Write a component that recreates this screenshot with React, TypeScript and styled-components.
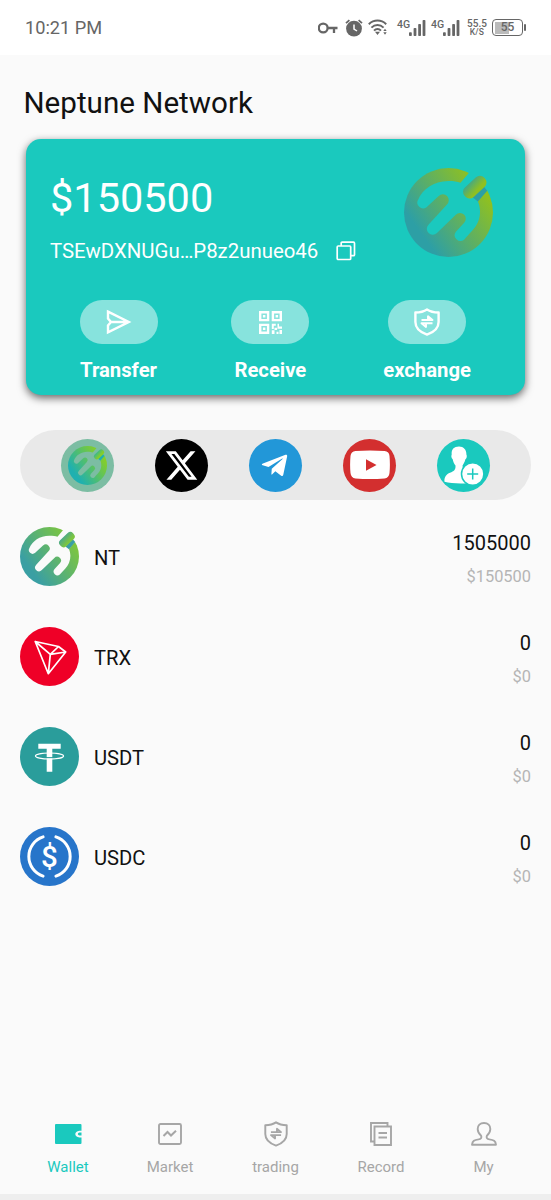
import React from "react";
import styled, { createGlobalStyle } from "styled-components";
import { FaTelegramPlane } from "react-icons/fa";
import { FaXTwitter } from "react-icons/fa6";

const TEAL = "#1ac9be";

const GlobalStyle = createGlobalStyle`
  *, *::before, *::after { box-sizing: border-box; }
  body { margin: 0; background: #fafafa; font-family: Roboto, "Liberation Sans", sans-serif; }
  svg { display: block; flex: none; }
`;

const Screen = styled.div`
  display: flex;
  flex-direction: column;
  width: 551px;
  height: 1200px;
  background: #fafafa;
  color: #111;
  overflow: hidden;
`;

const StatusBar = styled.header`
  display: flex;
  align-items: center;
  justify-content: space-between;
  height: 55px;
  padding: 0 25px 0 25px;
  background: #fff;
  color: #666;
`;

const Clock = styled.span`
  font-size: 18.2px;
  line-height: 22px;
  padding-top: 1px;
`;

const StatusIcons = styled.div`
  display: flex;
  align-items: center;
`;

const Speed = styled.div`
  display: flex;
  flex-direction: column;
  align-items: center;
  width: 20px;
  margin: 0 5px 0 8px;
  font-weight: 500;
  font-size: 10px;
  line-height: 9px;
`;

const SpeedUnit = styled.span`
  font-size: 8.5px;
  letter-spacing: 0.2px;
`;

const Title = styled.h1`
  margin: 30px 0 0 23.5px;
  font-size: 29.6px;
  font-weight: 400;
  line-height: 36px;
`;

const Card = styled.section`
  width: 499px;
  height: 256px;
  margin: 18px 0 0 26px;
  padding-top: 29px;
  border-radius: 15px;
  background: ${TEAL};
  color: #fff;
  box-shadow: 0 3px 9px rgba(0, 0, 0, 0.6);
`;

const CardHead = styled.div`
  display: flex;
  justify-content: space-between;
  height: 95px;
  padding: 0 32.5px 0 24px;
`;

const Account = styled.div`
  display: flex;
  flex-direction: column;
  gap: 16px;
  padding-top: 5px;
`;

const Balance = styled.div`
  font-size: 41.5px;
  line-height: 50px;
`;

const Address = styled.div`
  display: flex;
  align-items: center;
  gap: 18px;
  font-size: 20.4px;
  line-height: 24px;
`;

const Actions = styled.div`
  display: flex;
  justify-content: space-between;
  margin-top: 37px;
  padding: 0 54px 0 53.5px;
`;

const Action = styled.div`
  display: flex;
  flex-direction: column;
  align-items: center;
  gap: 14px;
  font-size: 20.3px;
  font-weight: 700;
  line-height: 24px;
`;

const Pill = styled.div`
  display: flex;
  align-items: center;
  justify-content: center;
  width: 78px;
  height: 44px;
  border-radius: 22px;
  background: rgba(255, 255, 255, 0.48);
`;

const Socials = styled.nav`
  display: flex;
  align-items: center;
  justify-content: space-between;
  height: 70px;
  margin: 35px 20px 0;
  padding: 0 41px;
  border-radius: 35px;
  background: #e9e9e9;
`;

const SocialButton = styled.div<{ $bg: string }>`
  display: flex;
  align-items: center;
  justify-content: center;
  width: 53px;
  height: 53px;
  border-radius: 50%;
  background: ${(p) => p.$bg};
  color: #fff;
`;

const Assets = styled.main`
  display: flex;
  flex-direction: column;
  flex: 1;
  gap: 41px;
  padding: 27px 20px 0;
`;

const AssetRow = styled.div`
  display: flex;
  align-items: center;
  height: 59px;
`;

const Symbol = styled.span`
  flex: 1;
  padding: 3px 0 0 15px;
  font-size: 20.2px;
  line-height: 24px;
`;

const Amounts = styled.div`
  display: flex;
  flex-direction: column;
  align-items: flex-end;
  gap: 12px;
  padding-top: 5px;
`;

const Quantity = styled.span`
  font-size: 20px;
  line-height: 24px;
`;

const Fiat = styled.span`
  font-size: 16.4px;
  line-height: 20px;
  color: #b5b5b5;
`;

const TabBar = styled.nav`
  display: grid;
  grid-template-columns: 102px 102px 109px 102px 103px;
  height: 74px;
  padding-left: 17px;
`;

const Tab = styled.div<{ $active?: boolean }>`
  display: flex;
  flex-direction: column;
  align-items: center;
  gap: 9px;
  font-size: 15px;
  line-height: 20px;
  color: ${(p) => (p.$active ? TEAL : "#a6a6a6")};
`;

const IconSlot = styled.div`
  display: flex;
  align-items: center;
  height: 28px;
`;

const BottomEdge = styled.div`
  height: 6px;
  background: #eee;
`;

type LogoProps = { size: number; id: string; from: string; to: string };

function NeptuneLogo({ size, id, from, to }: LogoProps) {
  return (
    <svg width={size} height={size} viewBox="0 0 100 100">
      <defs>
        <linearGradient id={id + "g"} x1="0.12" y1="0.8" x2="0.88" y2="0.25">
          <stop offset="0.1" stopColor={from} />
          <stop offset="1" stopColor={to} />
        </linearGradient>
        <linearGradient id={id + "h"} x1="0.3" y1="-0.3" x2="0.55" y2="0.8">
          <stop offset="0" stopColor={from} />
          <stop offset="1" stopColor={to} />
        </linearGradient>
        <mask id={id + "m"}>
          <rect width="100" height="100" fill="#fff" />
          <path
            fill="#000"
            d="M16 35.5C21 24 33 14.7 50 14.7C56 14.7 60 15.4 63.5 16.5L75 3L90 3L94 24L83 37C86 45 86.5 53 83 61C80 68 74 73 67.5 80.5A6.5 6.5 0 0 1 58.3 71.5L67.6 61.5A6.5 6.5 0 0 0 58.2 52.5L37 73A6.5 6.5 0 0 1 27.5 63.8L48.3 41A6.5 6.5 0 0 0 39 31.5L25.3 44.2A6.5 6.5 0 0 1 16 35.5Z"
          />
        </mask>
      </defs>
      <circle cx="50" cy="50" r="50" fill={`url(#${id}g)`} mask={`url(#${id}m)`} />
      <path d="M77 33L89 20L93.5 25.500L83 37.500Z" fill={from} />
      <rect x="64.500" y="14.200" width="30" height="14.500" rx="6.500" transform="rotate(-43 79.5 21.4)" fill={`url(#${id}h)`} />
    </svg>
  );
}

function KeyIcon() {
  return (
    <svg width="20" height="14" viewBox="0 0 20 14" fill="none" stroke="currentColor" strokeWidth="2.3">
      <circle cx="5.2" cy="7" r="4.4" />
      <path d="M9 7H19.5M16 7v5" />
    </svg>
  );
}

function AlarmIcon() {
  return (
    <svg width="18" height="18" viewBox="0 0 18 18" style={{ marginLeft: 7 }}>
      <circle cx="9" cy="9.6" r="7.9" fill="currentColor" />
      <path d="M1 4.2L4.4 1.2M17 4.2L13.6 1.2" stroke="currentColor" strokeWidth="1.8" fill="none" />
      <path d="M9 5.5V10l3 2" stroke="#fff" strokeWidth="1.5" fill="none" />
    </svg>
  );
}

function WifiIcon() {
  return (
    <svg width="20" height="17" viewBox="0 0 20 17" fill="none" stroke="currentColor" strokeWidth="2" style={{ marginLeft: 5, marginRight: 3 }}>
      <path d="M.8 5.2C5.8.4 13.2.4 18.2 5.2M3.4 8.6C7 5 12 5 15.6 8.600M6 11.600c2-2 5-2 7 0" />
      <path d="M7 12.700h5L9.500 15.900z" fill="currentColor" stroke="none" />
      <path d="M15.300 12L17 9.800 18.700 12zM15.300 13.300h3.400L17 15.700z" fill="currentColor" stroke="none" />
    </svg>
  );
}

const Signal = styled.div`
  display: flex;
  align-items: flex-start;
  width: 28px;
  height: 18px;
  margin-left: 6px;
  font-size: 10.5px;
  font-weight: 500;
  line-height: 11px;
`;

function SignalIcon() {
  return (
    <Signal>
      4G
      <svg width="17" height="18" viewBox="0 0 17 18" fill="currentColor" style={{ marginLeft: -1 }}>
        <rect x="0" y="13.2" width="2.8" height="3.8" rx="0.8" />
        <rect x="4.6" y="9" width="2.8" height="8" rx="0.8" />
        <rect x="9.2" y="5" width="2.8" height="12" rx="0.8" />
        <rect x="13.6" y="1" width="2.8" height="16" rx="0.8" />
      </svg>
    </Signal>
  );
}

const Battery = styled.div`
  display: flex;
  align-items: center;
`;

const BatteryBody = styled.div`
  width: 31px;
  height: 17px;
  border: 1.5px solid #666;
  border-radius: 4px;
  background: linear-gradient(#bbb, #bbb) 1.5px 1.5px / 14px 12px no-repeat;
  font-size: 12px;
  font-weight: 500;
  line-height: 15px;
  text-align: center;
`;

const BatteryCap = styled.div`
  width: 2px;
  height: 7px;
  margin-left: 1px;
  border-radius: 1px;
  background: #666;
`;

function CopyIcon() {
  return (
    <svg width="20" height="20" viewBox="0 0 20 20" fill="none" stroke="#fff" strokeWidth="1.7" strokeLinejoin="round">
      <rect x="1.2" y="5" width="13.5" height="13.5" rx="1" />
      <path d="M5.200 5V2.200Q5.200 1.200 6.200 1.200H17.500Q18.500 1.200 18.500 2.200V13.700Q18.500 14.700 17.500 14.700H14.700" />
    </svg>
  );
}

function SendIcon() {
  return (
    <svg width="26" height="26" viewBox="0 0 26 26" fill="none" stroke="#fff" strokeWidth="2.4" strokeLinejoin="miter">
      <path d="M2 2.600L22.800 13 2 23.400V16.500L5 13 2 9.500zM5 13H22" />
    </svg>
  );
}

function QrIcon() {
  return (
    <svg width="23" height="23" viewBox="0 0 23 23" fill="none" stroke="#fff" strokeWidth="2.4">
      <path d="M1.200 1.200h7.900v7.900H1.200zM13.900 1.200h7.900v7.900h-7.900zM1.200 13.900h7.900v7.900H1.200z" />
      <path fill="#fff" stroke="none" d="M3.900 3.900h2.500v2.500H3.900zM16.600 3.900h2.500v2.500h-2.500zM3.900 16.600h2.500v2.500H3.900zM12.800 12.800h4v2h-2v3.200h-2zM18.500 12.800H20v2.600h3v2.300h-4.500zM15.500 16.800h2.600v2.300h-2.600zM12.800 19.300h2.700V23h-2.700zM17.500 20.800h2V23h-2zM20.500 19H23v4h-2.500z" />
    </svg>
  );
}

function ShieldIcon({ width = 26, stroke = 2.4 }: { width?: number; stroke?: number }) {
  return (
    <svg width={width} height={width * 1.08} viewBox="0 0 26 28" fill="none" stroke="currentColor" strokeWidth={stroke} strokeLinejoin="round">
      <path d="M13 1.400C10 3.400 5.500 4.400 1.400 4.500V14c0 6.400 5 10.300 11.600 12.600C19.600 24.300 24.600 20.400 24.600 14V4.500C20.500 4.400 16 3.400 13 1.400z" />
      <path d="M7.500 12H18.500L14 8.300V12M18.500 15.200H7.500L12 18.900V15.200" strokeWidth="1.900" />
    </svg>
  );
}

function YoutubeIcon() {
  return (
    <svg width="40" height="30" viewBox="0 0 40 30">
      <path d="M5.500 1Q20 0 34.500 1Q39.200 1.500 39.500 6Q40.300 15 39.500 23Q39 28 34.500 28.400Q20 29.500 5.500 28.400Q1 28 .5 23Q-.3 15 .5 6Q1 1.500 5.500 1z" fill="#fff" />
      <path d="M16 9.300L26.500 14.900 16 20.700z" fill="#d32f2f" />
    </svg>
  );
}

function InviteIcon() {
  return (
    <svg width="53" height="53" viewBox="0 0 53 53">
      <path d="M22 7.500C26.500 7.500 29.500 10.500 29.400 15.500C30.300 17 29.600 19.500 28.400 20.200C27.800 23 26.500 25 25.600 26.200C25.500 30.500 27 31 32 33.500L30 44.200C22 44.800 13 44.200 7.500 42.800C7 38 9.500 35.300 13 33.800C17 32 18.800 31 18.500 26.500C17.200 25 16.100 22.800 15.700 20.200C14.300 19 14 16.800 14.700 15.400C14.200 10.500 17 7.500 22 7.500z" fill="#fff" />
      <circle cx="35.700" cy="35" r="11.200" fill="#fff" stroke={TEAL} strokeWidth="1.500" />
      <path d="M35.700 29.500v11M30.200 35h11" stroke={TEAL} strokeWidth="1.500" />
    </svg>
  );
}

function TronCoin() {
  return (
    <svg width="59" height="59" viewBox="0 0 59 59">
      <circle cx="29.500" cy="29.500" r="29.500" fill="#ef0027" />
      <path d="M15.200 14.500L38.500 19.500 45.700 25 28.300 46.700zM15.200 14.500L30.300 27.300 28.300 46.700M38.500 19.500L30.300 27.300 45.700 25" fill="none" stroke="#fff" strokeWidth="1.700" strokeLinejoin="round" />
    </svg>
  );
}

function TetherCoin() {
  return (
    <svg width="59" height="59" viewBox="0 0 59 59">
      <circle cx="29.500" cy="29.500" r="29.500" fill="#2a9d9b" />
      <path d="M18.300 16.700h22.400v5h-8.400v23h-5.600v-23h-8.400z" fill="#fff" />
      <path d="M26 30.700h7" stroke="#2a9d9b" strokeWidth="1.200" />
      <ellipse cx="29.500" cy="29" rx="14.100" ry="3" fill="none" stroke="#fff" strokeWidth="1.100" />
    </svg>
  );
}

function UsdcCoin() {
  return (
    <svg width="59" height="59" viewBox="0 0 59 59">
      <circle cx="29.500" cy="29.500" r="29.500" fill="#2775ca" />
      <path d="M23.100 9.900A20.600 20.600 0 0 0 23.100 49.100M35.900 9.900A20.600 20.600 0 0 1 35.900 49.100" fill="none" stroke="#fff" strokeWidth="3" strokeLinecap="round" />
      <text x="29.500" y="40" textAnchor="middle" fill="#fff" fontFamily="Roboto" fontSize="29.500" fontWeight="500">$</text>
    </svg>
  );
}

function WalletIcon() {
  return (
    <svg width="27" height="20" viewBox="0 0 27 20">
      <path d="M1 0H25.500Q26.500 0 26.500 1V6.700H24.500Q20.300 7.500 20.300 10Q20.300 12.800 24.500 13.500H26.500V19Q26.500 20 25.500 20H1Q0 20 0 19V1Q0 0 1 0z" fill="currentColor" />
      <path d="M26.500 8.600H24.500Q22.800 9 22.800 10.100Q22.800 11.300 24.500 11.600H26.500z" fill="currentColor" />
    </svg>
  );
}

function MarketIcon() {
  return (
    <svg width="24" height="22" viewBox="0 0 24 22" fill="none" stroke="currentColor" strokeWidth="1.900">
      <rect x="1" y="0.950" width="22" height="20.100" rx="1.500" />
      <path d="M5.500 13L9.500 9 13 12.500 18 7.800" strokeWidth="2" />
    </svg>
  );
}

function RecordIcon() {
  return (
    <svg width="22" height="24" viewBox="0 0 22 24" fill="none" stroke="currentColor" strokeWidth="1.900">
      <path d="M4.500 19.500H1V1H17.500V4" />
      <path d="M4.500 4.500H21V23H4.500zM8.500 11h8.500M8.500 15.500h8.500" />
    </svg>
  );
}

function PersonIcon() {
  return (
    <svg width="26" height="24" viewBox="0 0 26 24" fill="none" stroke="currentColor" strokeWidth="1.900" strokeLinejoin="round">
      <path d="M13 1C16.900 1 19.400 3.300 19.300 7.200C19.200 10 17.800 12 15.900 13.700C15.200 16 16 16.900 18.500 17.400C22.500 18 24.600 18.800 25 22.800H1C1.400 18.800 3.500 18 7.500 17.400C10 16.900 10.800 16 10.100 13.700C8.200 12 6.800 10 6.700 7.200C6.600 3.300 9.100 1 13 1z" />
    </svg>
  );
}

const assets = [
  { symbol: "NT", quantity: "1505000", fiat: "$150500", icon: <NeptuneLogo size={59} id="nt" from="#3a9fa3" to="#7cc540" /> },
  { symbol: "TRX", quantity: "0", fiat: "$0", icon: <TronCoin /> },
  { symbol: "USDT", quantity: "0", fiat: "$0", icon: <TetherCoin /> },
  { symbol: "USDC", quantity: "0", fiat: "$0", icon: <UsdcCoin /> },
];

const tabs = [
  { label: "Wallet", icon: <WalletIcon />, active: true },
  { label: "Market", icon: <MarketIcon /> },
  { label: "trading", icon: <ShieldIcon width={24} stroke={2.1} /> },
  { label: "Record", icon: <RecordIcon /> },
  { label: "My", icon: <PersonIcon /> },
];

export default function App() {
  return (
    <Screen>
      <GlobalStyle />
      <StatusBar>
        <Clock>10:21 PM</Clock>
        <StatusIcons>
          <KeyIcon />
          <AlarmIcon />
          <WifiIcon />
          <SignalIcon />
          <SignalIcon />
          <Speed>
            55.5
            <SpeedUnit>K/S</SpeedUnit>
          </Speed>
          <Battery>
            <BatteryBody>55</BatteryBody>
            <BatteryCap />
          </Battery>
        </StatusIcons>
      </StatusBar>
      <Title>Neptune Network</Title>
      <Card>
        <CardHead>
          <Account>
            <Balance>$150500</Balance>
            <Address>
              TSEwDXNUGu…P8z2unueo46
              <CopyIcon />
            </Address>
          </Account>
          <NeptuneLogo size={89} id="card" from="#2d9fa5" to="#8fc021" />
        </CardHead>
        <Actions>
          <Action>
            <Pill><SendIcon /></Pill>
            Transfer
          </Action>
          <Action>
            <Pill><QrIcon /></Pill>
            Receive
          </Action>
          <Action>
            <Pill><ShieldIcon /></Pill>
            exchange
          </Action>
        </Actions>
      </Card>
      <Socials>
        <SocialButton $bg="#7cbda3"><NeptuneLogo size={39} id="soc" from="#1fb0b0" to="#86ce28" /></SocialButton>
        <SocialButton $bg="#000"><FaXTwitter size={35} /></SocialButton>
        <SocialButton $bg="#2297d8"><FaTelegramPlane size={29} style={{ marginRight: 3 }} /></SocialButton>
        <SocialButton $bg="#d32f2f"><YoutubeIcon /></SocialButton>
        <SocialButton $bg={TEAL}><InviteIcon /></SocialButton>
      </Socials>
      <Assets>
        {assets.map((a) => (
          <AssetRow key={a.symbol}>
            {a.icon}
            <Symbol>{a.symbol}</Symbol>
            <Amounts>
              <Quantity>{a.quantity}</Quantity>
              <Fiat>{a.fiat}</Fiat>
            </Amounts>
          </AssetRow>
        ))}
      </Assets>
      <TabBar>
        {tabs.map((t) => (
          <Tab key={t.label} $active={t.active}>
            <IconSlot>{t.icon}</IconSlot>
            {t.label}
          </Tab>
        ))}
      </TabBar>
      <BottomEdge />
    </Screen>
  );
}
